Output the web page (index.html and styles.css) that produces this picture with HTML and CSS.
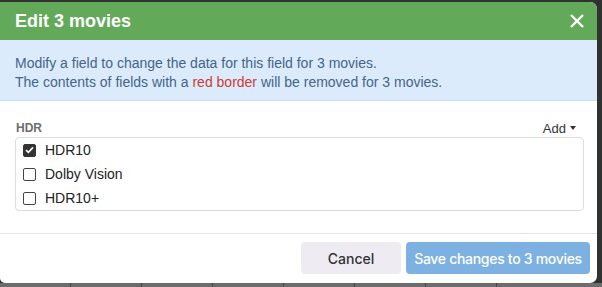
FILE: index.html
```html
<!DOCTYPE html>
<html>
  <head>
    <title>Edit 3 movies</title>
    <link rel="stylesheet" href="styles.css">
  </head>
  <body>
    <div class="modal">
      <header class="modal-header">
        <h1>Edit 3 movies</h1>
        <button type="button" class="close-button" aria-label="Close">
          <svg width="14" height="14" viewBox="0 0 14 14">
            <path d="M1 1 L13 13 M13 1 L1 13" stroke="#fff" stroke-width="2.4" fill="none"/>
          </svg>
        </button>
      </header>

      <div class="info">
        <p>Modify a field to change the data for this field for 3 movies.</p>
        <p>The contents of fields with a <span class="red">red border</span> will be removed for 3 movies.</p>
      </div>

      <div class="modal-body">
        <div class="field-head">
          <label>HDR</label>
          <span class="add">Add <span class="caret"></span></span>
        </div>
        <ul class="check-list">
          <li><span class="box checked">
            <svg width="9" height="8" viewBox="0 0 9 8"><path d="M1 4.2 L3.4 6.4 L8 1.4" stroke="#fff" stroke-width="1.6" fill="none"/></svg>
          </span>HDR10</li>
          <li><span class="box"></span>Dolby Vision</li>
          <li><span class="box"></span>HDR10+</li>
        </ul>
      </div>

      <footer class="modal-footer">
        <button type="button" class="btn btn-cancel">Cancel</button>
        <button type="button" class="btn btn-save">Save changes to 3 movies</button>
      </footer>
    </div>

    <!-- table behind the dialog -->
    <div class="behind">
      <span></span><span></span><span></span><span></span><span></span><span></span><span></span>
    </div>
  </body>
</html>
```

FILE: styles.css
```css
/* Global styles */
body {
  margin: 0;
  padding: 2px 0 0 0;
  background-color: #2f3230;
  font-family: "Liberation Sans", Arial, sans-serif;
  overflow: hidden;
}

/* Dialog */
.modal {
  width: 597px;
  background-color: #fff;
  border-radius: 0 7px 7px 5px;
  overflow: hidden;
}

.modal-header {
  display: flex;
  align-items: center;
  justify-content: space-between;
  height: 38px;
  padding: 0 13px 0 15px;
  background-color: #62a95a;
}

.modal-header h1 {
  margin: 0;
  color: #fff;
  font-size: 18px;
  font-weight: bold;
}

.close-button {
  border: none;
  background: none;
  padding: 0;
  display: flex;
}

/* Info bar */
.info {
  background-color: #dcebfb;
  border-bottom: 1px solid #c7ddf3;
  padding: 14px 15px 8px;
  color: #43658a;
  font-size: 14px;
  line-height: 19px;
}

.info p {
  margin: 0;
}

.red {
  color: #cc3b33;
}

/* Body */
.modal-body {
  padding: 20px 13px 22px 15px;
  border-bottom: 1px solid #e2e2e2;
}

.field-head {
  display: flex;
  justify-content: space-between;
  align-items: center;
  padding: 0 8px 0 1px;
  height: 14px;
  margin-bottom: 2px;
}

.field-head label {
  color: #6d6d6d;
  font-size: 12px;
  font-weight: bold;
}

.add {
  color: #333;
  font-size: 13px;
  display: flex;
  align-items: center;
  gap: 4px;
}

.caret {
  width: 0;
  height: 0;
  border-left: 3.5px solid transparent;
  border-right: 3.5px solid transparent;
  border-top: 4px solid #333;
}

.check-list {
  list-style: none;
  margin: 0;
  padding: 0;
  border: 1px solid #dcdcdc;
  border-radius: 4px;
}

.check-list li {
  display: flex;
  align-items: center;
  height: 24px;
  padding-left: 7px;
  color: #222;
  font-size: 14px;
}

.box {
  width: 11px;
  height: 11px;
  border: 1px solid #444;
  border-radius: 2px;
  margin-right: 9px;
  display: flex;
  align-items: center;
  justify-content: center;
}

.box.checked {
  background-color: #333;
  border-color: #333;
}

/* Footer */
.modal-footer {
  display: flex;
  justify-content: flex-end;
  gap: 5px;
  padding: 8px 7px 9px 0;
}

.btn {
  height: 32px;
  border: none;
  border-radius: 4px;
  font-family: Inter, "Noto Sans", sans-serif;
  font-size: 14px;
  font-weight: 500;
  padding: 0;
  white-space: nowrap;
}

.btn-cancel {
  width: 100px;
  background-color: #eeecf2;
  color: #333;
}

.btn-save {
  width: 184px;
  background-color: #7db1e2;
  color: #fff;
  letter-spacing: -0.3px;
}

/* Table row peeking out below the dialog */
.behind {
  display: flex;
  height: 4px;
  background-color: #6c6c6c;
}

.behind span {
  width: 70px;
  border-right: 1px solid #444;
}
```
